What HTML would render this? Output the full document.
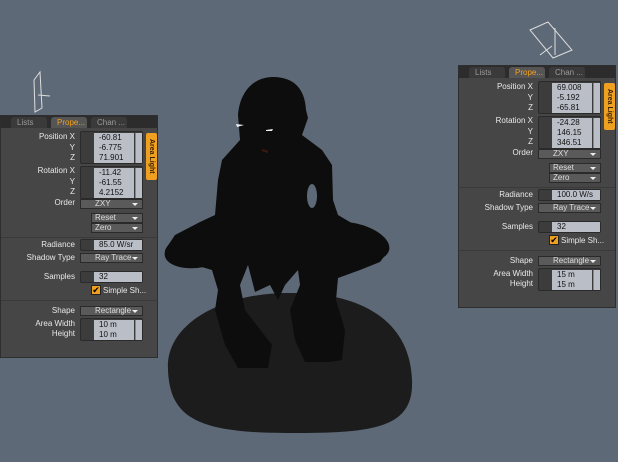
<!DOCTYPE html><html><head><style>
body{margin:0;width:618px;height:462px;overflow:hidden;background:#5e6977;font-family:"Liberation Sans",sans-serif;position:relative}
.p{position:absolute;width:158px;height:243px;background:#464646;border:1px solid #2e2e2e;box-sizing:border-box;font-size:8px;color:#e8e8e8}
.p *{position:absolute;box-sizing:border-box}
.tb{left:0;top:0;width:100%;height:12px;background:#2c2c2c}
.tab{top:1px;height:11px;line-height:11px;color:#9a9a9a;padding-left:6px;background:#3a3a3a;border-radius:3px 3px 0 0}
.l{right:82px;text-align:right;white-space:nowrap;line-height:10px}
.g{left:79px;width:63px;background:#3c3c3c;border:1px solid #2a2a2a;border-radius:2px}
.f{left:13px;width:40px;height:10px;background:#b9bec7;color:#111;line-height:10px;padding-left:5px;overflow:hidden;white-space:nowrap;font-size:8px}
.e{left:54px;width:7px;height:10px;background:#b9bec7;border-left:1px solid #888}
.dd{left:79px;width:63px;height:10px;background:#5a5a5a;border:1px solid #2a2a2a;line-height:8px;padding-left:14px;color:#ddd}
.dd:after{content:"";position:absolute;right:4px;top:3px;border:3px solid transparent;border-top:3px solid #eee}
.o{left:145px;top:17px;width:11px;height:47px;background:#f0a020;border-radius:2px;color:#3a2000;writing-mode:vertical-rl;font-size:7px;line-height:11px;text-align:center;font-weight:bold}
.sep{left:0;width:100%;height:1px;background:#3a3a3a}
</style></head><body>
<svg width="618" height="462" style="position:absolute;left:0;top:0">
<path d="M168 370 C165 320 230 292 290 293 C360 292 410 320 412 380 C414 425 380 433 300 433 C200 434 170 420 168 370Z" fill="#1c1c1c"/>
<g fill="#0d0d0d">
<path d="M273 77 C295 77 305 90 306 110 L308 118 L302 135 L322 150 L332 165 L333 200 L338 215 L360 228 L385 238 L389 250 L380 262 L360 270 L338 278 L336 300 L345 330 L342 360 L330 362 L305 362 L295 340 L290 310 L300 285 L298 270 L285 285 L278 300 L270 285 L255 292 L248 265 L240 285 L245 310 L272 345 L268 368 L238 368 L225 345 L215 310 L218 290 L212 270 L195 265 L172 262 L165 250 L175 235 L200 222 L215 215 L218 180 L222 160 L240 140 L238 115 C240 90 255 77 273 77Z"/>
<ellipse cx="202" cy="248" rx="38" ry="19" transform="rotate(-12 202 248)"/>
<ellipse cx="352" cy="242" rx="38" ry="19" transform="rotate(12 352 242)"/>
</g>
<ellipse cx="312" cy="196" rx="5" ry="12" fill="#5e6977"/>
<path d="M236 124 l8 1 l-7 2z M266 130 l7 -1 l-1 2 l-6 0z" fill="#eee"/>
<path d="M262 150 l6 2" stroke="#3a1a10" stroke-width="2"/>
<g stroke="#ddd" stroke-width="1" fill="none"><path d="M34 80 L40 72 L42 108 L35 112 Z M38 95 L50 96"/><path d="M530 30 L548 22 L572 50 L553 58 Z M540 55 L552 46 M555 28 L555 55" /></g>
</svg>

<div class="p" style="left:0;top:115px">
<div class="tb"></div>
<div class="tab" style="left:10px;width:36px">Lists</div>
<div class="tab" style="left:50px;width:36px;background:#555;color:#f0a020">Prope...</div>
<div class="tab" style="left:90px;width:36px">Chan ...</div>
<div class="l" style="top:16px">Position X</div><div class="l" style="top:27px">Y</div><div class="l" style="top:37px">Z</div>
<div class="g" style="top:15px;height:33px"><div class="f" style="top:1px">-60.81</div><div class="e" style="top:1px"></div><div class="f" style="top:11px">-6.775</div><div class="e" style="top:11px"></div><div class="f" style="top:21px">71.901</div><div class="e" style="top:21px"></div></div>
<div class="l" style="top:50px">Rotation X</div><div class="l" style="top:61px">Y</div><div class="l" style="top:71px">Z</div>
<div class="g" style="top:50px;height:33px"><div class="f" style="top:1px">-11.42</div><div class="e" style="top:1px"></div><div class="f" style="top:11px">-61.55</div><div class="e" style="top:11px"></div><div class="f" style="top:21px">4.2152</div><div class="e" style="top:21px"></div></div>
<div class="l" style="top:82px">Order</div><div class="dd" style="top:83px">ZXY</div>
<div class="dd" style="top:97px;left:90px;width:52px;padding-left:3px">Reset</div>
<div class="dd" style="top:107px;left:90px;width:52px;padding-left:3px">Zero</div>
<div class="sep" style="top:121px"></div>
<div class="l" style="top:124px">Radiance</div><div class="g" style="top:123px;height:12px"><div class="f" style="top:0;width:48px">85.0 W/sr</div></div>
<div class="l" style="top:137px">Shadow Type</div><div class="dd" style="top:137px">Ray Trace</div>
<div class="l" style="top:156px">Samples</div><div class="g" style="top:155px;height:12px"><div class="f" style="top:0;width:48px">32</div></div>
<div style="left:90px;top:169px;width:10px;height:10px;background:#f0a020;border:1px solid #222;color:#000;font-size:9px;line-height:8px;text-align:center">✔</div><div style="left:102px;top:170px;white-space:nowrap">Simple Sh...</div>
<div class="sep" style="top:184px"></div>
<div class="l" style="top:190px">Shape</div><div class="dd" style="top:190px">Rectangle</div>
<div class="l" style="top:203px">Area Width</div><div class="l" style="top:213px">Height</div>
<div class="g" style="top:202px;height:23px"><div class="f" style="top:1px">10 m</div><div class="e" style="top:1px"></div><div class="f" style="top:11px">10 m</div><div class="e" style="top:11px"></div></div>
<div class="o">Area Light</div>
</div>

<div class="p" style="left:458px;top:65px">
<div class="tb"></div>
<div class="tab" style="left:10px;width:36px">Lists</div>
<div class="tab" style="left:50px;width:36px;background:#555;color:#f0a020">Prope...</div>
<div class="tab" style="left:90px;width:36px">Chan ...</div>
<div class="l" style="top:16px">Position X</div><div class="l" style="top:27px">Y</div><div class="l" style="top:37px">Z</div>
<div class="g" style="top:15px;height:33px"><div class="f" style="top:1px">69.008</div><div class="e" style="top:1px"></div><div class="f" style="top:11px">-5.192</div><div class="e" style="top:11px"></div><div class="f" style="top:21px">-65.81</div><div class="e" style="top:21px"></div></div>
<div class="l" style="top:50px">Rotation X</div><div class="l" style="top:61px">Y</div><div class="l" style="top:71px">Z</div>
<div class="g" style="top:50px;height:33px"><div class="f" style="top:1px">-24.28</div><div class="e" style="top:1px"></div><div class="f" style="top:11px">146.15</div><div class="e" style="top:11px"></div><div class="f" style="top:21px">346.51</div><div class="e" style="top:21px"></div></div>
<div class="l" style="top:82px">Order</div><div class="dd" style="top:83px">ZXY</div>
<div class="dd" style="top:97px;left:90px;width:52px;padding-left:3px">Reset</div>
<div class="dd" style="top:107px;left:90px;width:52px;padding-left:3px">Zero</div>
<div class="sep" style="top:121px"></div>
<div class="l" style="top:124px">Radiance</div><div class="g" style="top:123px;height:12px"><div class="f" style="top:0;width:48px">100.0 W/s</div></div>
<div class="l" style="top:137px">Shadow Type</div><div class="dd" style="top:137px">Ray Trace</div>
<div class="l" style="top:156px">Samples</div><div class="g" style="top:155px;height:12px"><div class="f" style="top:0;width:48px">32</div></div>
<div style="left:90px;top:169px;width:10px;height:10px;background:#f0a020;border:1px solid #222;color:#000;font-size:9px;line-height:8px;text-align:center">✔</div><div style="left:102px;top:170px;white-space:nowrap">Simple Sh...</div>
<div class="sep" style="top:184px"></div>
<div class="l" style="top:190px">Shape</div><div class="dd" style="top:190px">Rectangle</div>
<div class="l" style="top:203px">Area Width</div><div class="l" style="top:213px">Height</div>
<div class="g" style="top:202px;height:23px"><div class="f" style="top:1px">15 m</div><div class="e" style="top:1px"></div><div class="f" style="top:11px">15 m</div><div class="e" style="top:11px"></div></div>
<div class="o">Area Light</div>
</div>
</body></html>
